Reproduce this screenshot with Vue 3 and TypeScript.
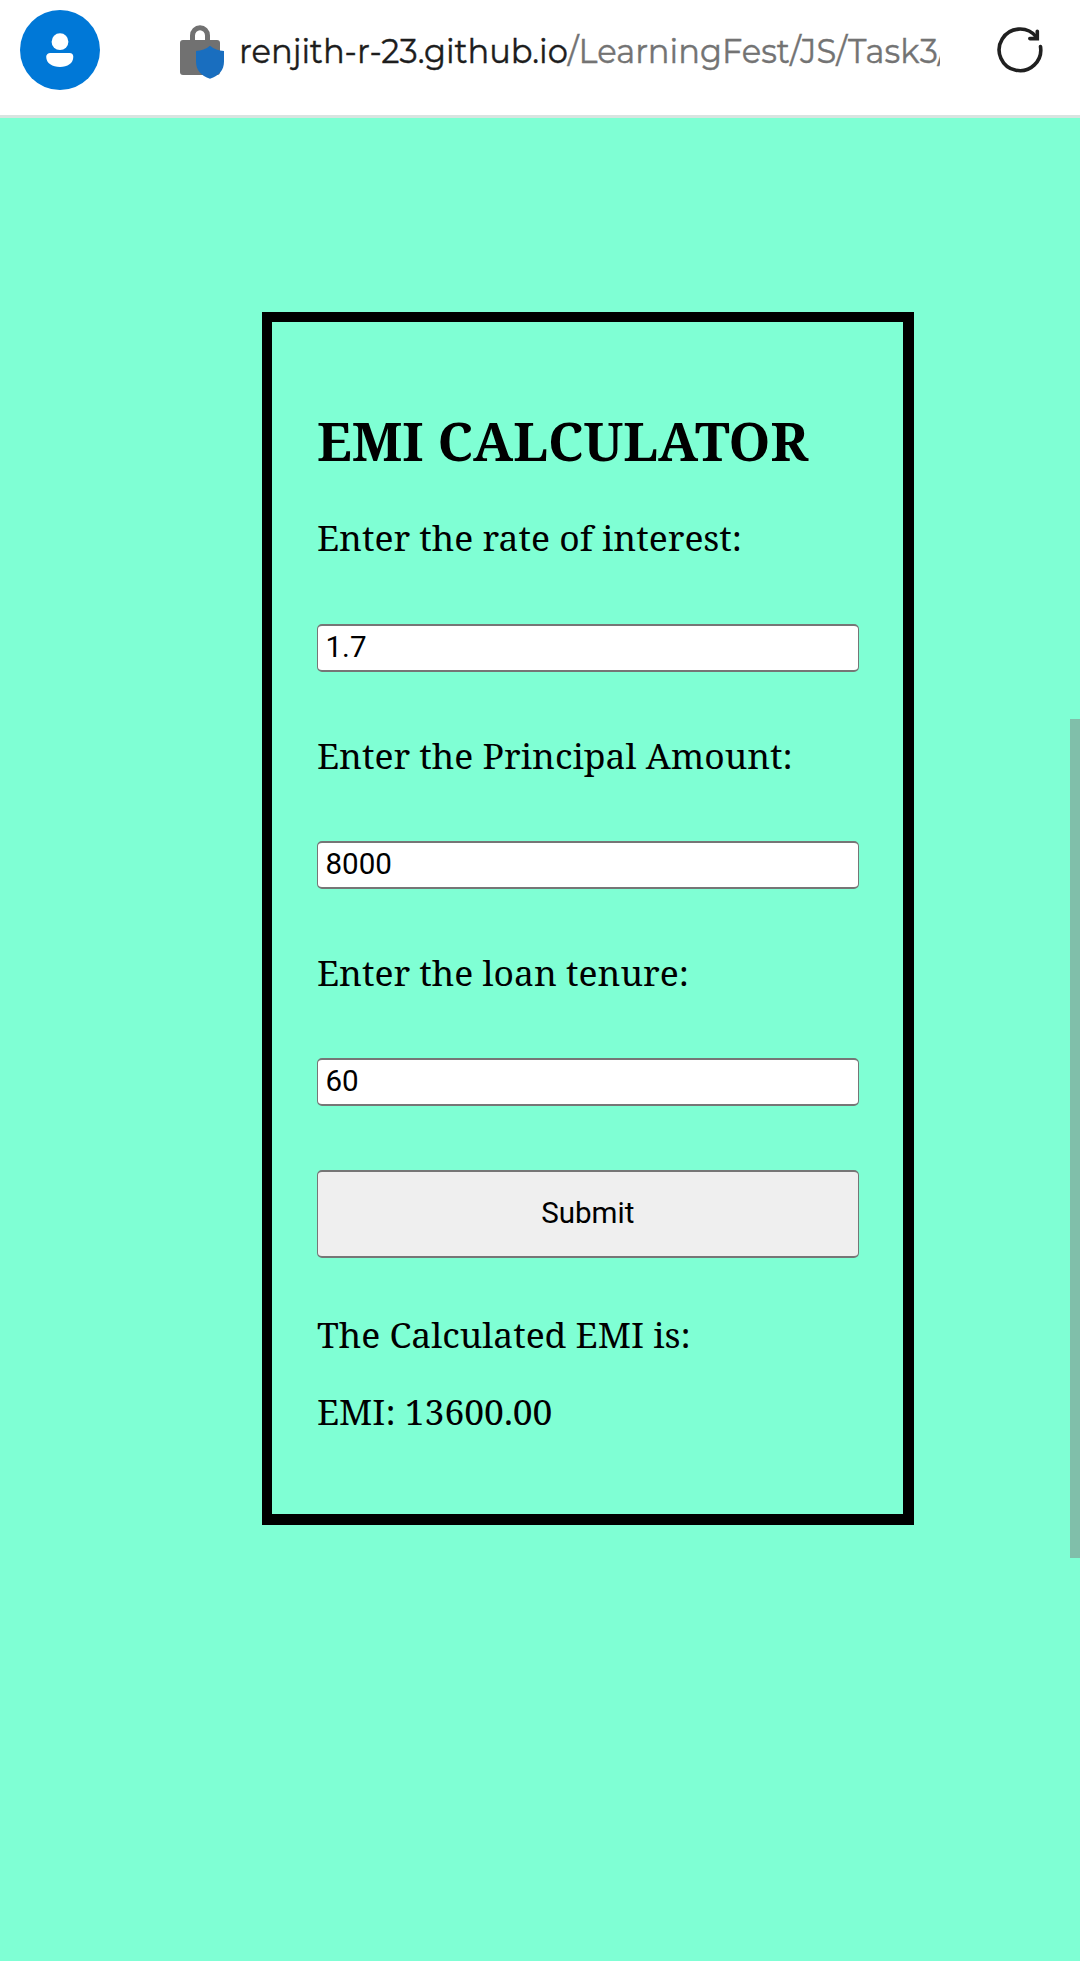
<script setup lang="ts">
import { computed, reactive, ref } from 'vue'

interface Field {
  key: 'rate' | 'principal' | 'tenure'
  label: string
}

const fields: Field[] = [
  { key: 'rate', label: 'Enter the rate of interest:' },
  { key: 'principal', label: 'Enter the Principal Amount:' },
  { key: 'tenure', label: 'Enter the loan tenure:' },
]

const values = reactive({ rate: '1.7', principal: '8000', tenure: '60' })
const emi = ref(13600)
const emiText = computed(() => `EMI: ${emi.value.toFixed(2)}`)

function submit(): void {
  const r = Number(values.rate)
  const p = Number(values.principal)
  const n = Number(values.tenure)
  const growth = Math.pow(1 + r, n)
  emi.value = (p * r * growth) / (growth - 1)
}
</script>

<template>
  <div class="screen">
    <header class="bar">
      <svg class="avatar" viewBox="0 0 80 80" aria-hidden="true">
        <circle cx="40" cy="40" r="40" fill="#0078d7" />
        <circle cx="40" cy="31.7" r="8.4" fill="#fff" />
        <path d="M30.500 43h19a3.800 3.800 0 0 1 3.800 3.800C53.300 53.500 47.500 57 40 57S26.200 53.500 26.200 46.800A4 3.800 0 0 1 30.500 43z" fill="#fff" />
      </svg>
      <svg class="lock" viewBox="0 0 46 56" aria-hidden="true">
        <path d="M12.500 18v-7.500a7.500 7.800 0 0 1 15 0v7.500" fill="none" stroke="#717171" stroke-width="5" />
        <rect x="0" y="15" width="40" height="35" rx="3" fill="#717171" />
        <path d="M30 20.700c4 3.200 8.500 5 14 5.300v10.500c0 8.500-5 14.500-14 17.300-9-2.800-14-8.800-14-17.300V26c5.500-.3 10-2.100 14-5.300z" fill="#196ebf" />
      </svg>
      <div class="address">
        <div class="url">renjith-r-23.github.io<span class="path">/LearningFest/JS/Task3/</span></div>
      </div>
      <svg class="reload" viewBox="0 0 50 50" aria-hidden="true">
        <g fill="none" stroke="#202020" stroke-width="3.600" stroke-linecap="round" stroke-linejoin="miter">
          <path d="M45.500 21.600A20.800 20.800 0 1 1 41.300 12" />
          <path d="M42.300 6.200v7.400H34.800" />
        </g>
      </svg>
    </header>

    <main class="content">
      <form class="card" @submit.prevent="submit">
        <h1>EMI CALCULATOR</h1>
        <div v-for="f in fields" :key="f.key" class="field">
          <label :for="f.key">{{ f.label }}</label>
          <input :id="f.key" v-model="values[f.key]" type="text" />
        </div>
        <button type="submit">Submit</button>
        <p>The Calculated EMI is:</p>
        <p>{{ emiText }}</p>
      </form>
      <div class="scrollbar"></div>
    </main>
  </div>
</template>

<style>
body {
  margin: 0;
  overflow: hidden;
}
</style>

<style scoped>
.screen {
  width: 1080px;
  height: 1961px;
  overflow: hidden;
  display: flex;
  flex-direction: column;
  background: #7fffd4;
  color: #000;
}

.bar {
  box-sizing: border-box;
  height: 118px;
  flex: none;
  display: flex;
  align-items: flex-start;
  background: #fff;
  border-bottom: 3px solid #d8e4e0;
}

.avatar {
  width: 80px;
  height: 80px;
  margin: 10px 0 0 20px;
}

.lock {
  width: 46px;
  height: 56px;
  margin: 25px 0 0 80px;
}

.address {
  width: 701px;
  height: 60px;
  margin: 21px 0 0 13px;
  overflow: hidden;
}

.url {
  font: 400 34.5px/60px Montserrat, 'Open Sans', sans-serif;
  white-space: nowrap;
  color: #1d1d1d;
  -webkit-text-stroke: 0.4px currentColor;
  transform: scaleX(0.932);
  transform-origin: 0 0;
}

.path {
  color: #737373;
}

.reload {
  width: 50px;
  height: 50px;
  margin: 25px 0 0 55px;
}

.content {
  position: relative;
  flex: 1;
}

.card {
  box-sizing: border-box;
  width: 652px;
  height: 1213px;
  margin: 194px 0 0 262px;
  padding: 82.600px 44.500px 0 45px;
  border: solid #000;
  border-width: 10px 11px 11px 10px;
  font: 35.470px/48.300px 'Noto Serif', 'DejaVu Serif Condensed', serif;
}

h1 {
  margin: 0 0 36.500px;
  font-size: 53.200px;
  line-height: 72.300px;
}

.field {
  display: flex;
  flex-direction: column;
  height: 217.200px;
}

label {
  display: block;
  margin-bottom: 62.200px;
}

input {
  box-sizing: border-box;
  width: 100%;
  height: 48px;
  margin: 0;
  padding: 0 7.500px 2.400px;
  border: solid #767676;
  border-width: 2px 1px;
  border-radius: 5px;
  background: #fff;
  color: #000;
  font: 29.560px Roboto, sans-serif;
  outline: none;
}

button {
  display: block;
  box-sizing: border-box;
  width: 100%;
  height: 88px;
  margin: 4.600px 0 52px;
  padding: 0 0 2px;
  border: solid #767676;
  border-width: 2px 1px;
  border-radius: 5px;
  background: #efefef;
  color: #000;
  font: 29.560px Roboto, sans-serif;
}

p {
  margin: 0 0 28.700px;
}

.scrollbar {
  position: absolute;
  top: 601px;
  right: 0;
  width: 10px;
  height: 839px;
  background: #80bfaa;
}
</style>
